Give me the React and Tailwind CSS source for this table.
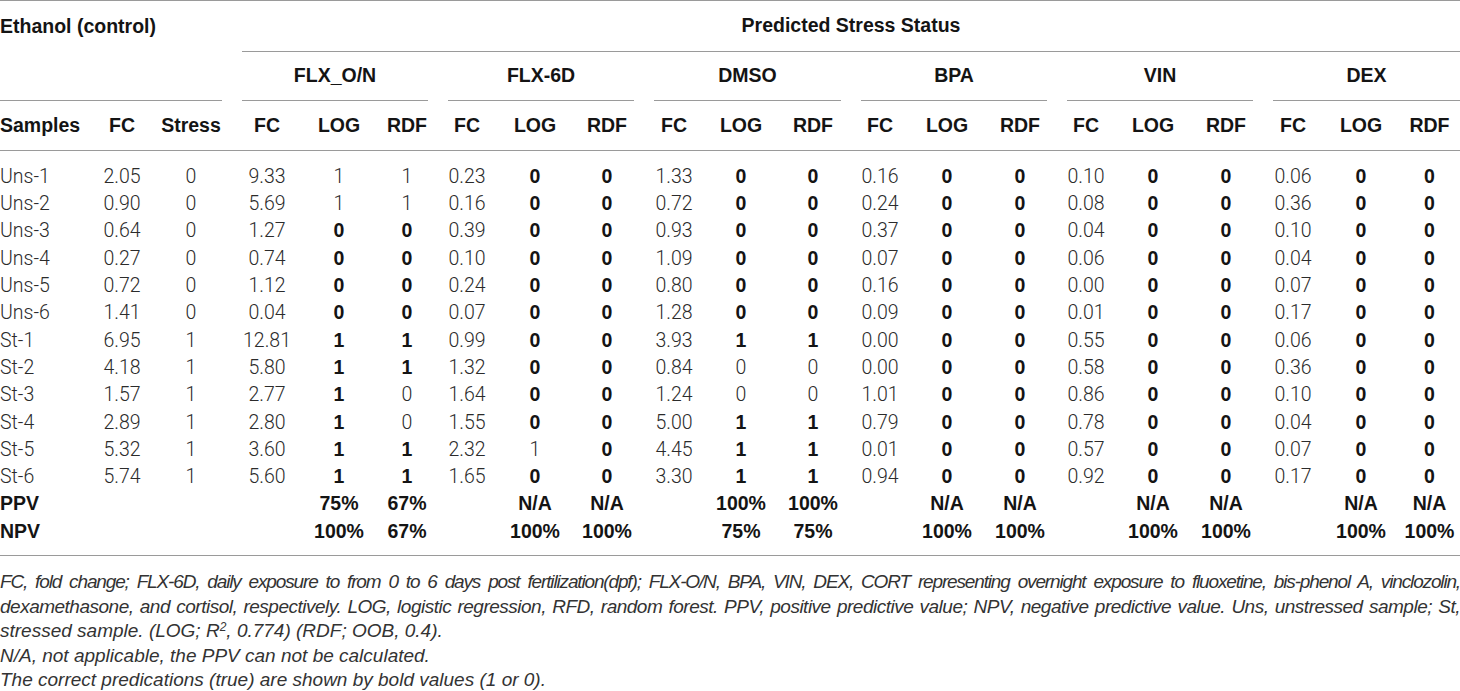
import React from "react";

const COLS =
  "grid grid-cols-[95px_54px_84px_68px_76px_60px_60px_76px_68px_66px_68px_76px_58px_76px_70px_62px_72px_74px_60px_76px_61px]";

const groups = [
  { name: "FLX_O/N", cls: "col-span-3 ml-[9px] mr-[9px]" },
  { name: "FLX-6D", cls: "col-span-3 ml-[11px] mr-[7px]" },
  { name: "DMSO", cls: "col-span-3 ml-[13px] mr-[10px]" },
  { name: "BPA", cls: "col-span-3 ml-[10px] mr-[8px]" },
  { name: "VIN", cls: "col-span-3 ml-[12px] mr-[10px]" },
  { name: "DEX", cls: "col-span-3 ml-[10px] mr-0" },
];

// value strings; a leading "*" marks bold
const rows = [
  ["Uns-1", "2.05", "0", "9.33", "1", "1", "0.23", "*0", "*0", "1.33", "*0", "*0", "0.16", "*0", "*0", "0.10", "*0", "*0", "0.06", "*0", "*0"],
  ["Uns-2", "0.90", "0", "5.69", "1", "1", "0.16", "*0", "*0", "0.72", "*0", "*0", "0.24", "*0", "*0", "0.08", "*0", "*0", "0.36", "*0", "*0"],
  ["Uns-3", "0.64", "0", "1.27", "*0", "*0", "0.39", "*0", "*0", "0.93", "*0", "*0", "0.37", "*0", "*0", "0.04", "*0", "*0", "0.10", "*0", "*0"],
  ["Uns-4", "0.27", "0", "0.74", "*0", "*0", "0.10", "*0", "*0", "1.09", "*0", "*0", "0.07", "*0", "*0", "0.06", "*0", "*0", "0.04", "*0", "*0"],
  ["Uns-5", "0.72", "0", "1.12", "*0", "*0", "0.24", "*0", "*0", "0.80", "*0", "*0", "0.16", "*0", "*0", "0.00", "*0", "*0", "0.07", "*0", "*0"],
  ["Uns-6", "1.41", "0", "0.04", "*0", "*0", "0.07", "*0", "*0", "1.28", "*0", "*0", "0.09", "*0", "*0", "0.01", "*0", "*0", "0.17", "*0", "*0"],
  ["St-1", "6.95", "1", "12.81", "*1", "*1", "0.99", "*0", "*0", "3.93", "*1", "*1", "0.00", "*0", "*0", "0.55", "*0", "*0", "0.06", "*0", "*0"],
  ["St-2", "4.18", "1", "5.80", "*1", "*1", "1.32", "*0", "*0", "0.84", "0", "0", "0.00", "*0", "*0", "0.58", "*0", "*0", "0.36", "*0", "*0"],
  ["St-3", "1.57", "1", "2.77", "*1", "0", "1.64", "*0", "*0", "1.24", "0", "0", "1.01", "*0", "*0", "0.86", "*0", "*0", "0.10", "*0", "*0"],
  ["St-4", "2.89", "1", "2.80", "*1", "0", "1.55", "*0", "*0", "5.00", "*1", "*1", "0.79", "*0", "*0", "0.78", "*0", "*0", "0.04", "*0", "*0"],
  ["St-5", "5.32", "1", "3.60", "*1", "*1", "2.32", "1", "*0", "4.45", "*1", "*1", "0.01", "*0", "*0", "0.57", "*0", "*0", "0.07", "*0", "*0"],
  ["St-6", "5.74", "1", "5.60", "*1", "*1", "1.65", "*0", "*0", "3.30", "*1", "*1", "0.94", "*0", "*0", "0.92", "*0", "*0", "0.17", "*0", "*0"],
  ["*PPV", "", "", "", "*75%", "*67%", "", "*N/A", "*N/A", "", "*100%", "*100%", "", "*N/A", "*N/A", "", "*N/A", "*N/A", "", "*N/A", "*N/A"],
  ["*NPV", "", "", "", "*100%", "*67%", "", "*100%", "*100%", "", "*75%", "*75%", "", "*100%", "*100%", "", "*100%", "*100%", "", "*100%", "*100%"],
];

const BOLD = "font-['Liberation_Sans',Arial,sans-serif] font-bold text-[#141414]";
const LIGHT = "font-['Roboto','Liberation_Sans',sans-serif] font-light text-[#2b2b2b]";

function Cell({ v, first }) {
  const bold = v.startsWith("*");
  const text = bold ? v.slice(1) : v;
  return (
    <div
      className={
        "h-[27.3px] flex items-center whitespace-nowrap " +
        (first ? "justify-start " : "justify-center ") +
        (bold ? BOLD : LIGHT)
      }
    >
      {text}
    </div>
  );
}

export default function App() {
  const headers = ["FC", "Stress", ...groups.flatMap(() => ["FC", "LOG", "RDF"])];
  return (
    <div className="w-[1460px] h-[691px] bg-white overflow-hidden text-[19.5px] leading-none">
      {/* header rows 1-2 */}
      <div className={COLS + " border-t border-[#9a9a9a] " + BOLD}>
        <div className="col-span-3 h-[51px] flex items-center">Ethanol (control)</div>
        <div className="col-span-18 ml-[9px] h-[51px] border-b border-[#9a9a9a] flex items-center justify-center">
          Predicted Stress Status
        </div>
        <div className="col-span-3 mr-[11px] h-[49px] border-b border-[#9a9a9a]" />
        {groups.map((g) => (
          <div
            key={g.name}
            className={g.cls + " h-[49px] border-b border-[#9a9a9a] flex items-center justify-center"}
          >
            {g.name}
          </div>
        ))}
      </div>
      {/* column header row */}
      <div className={COLS + " border-b border-[#9a9a9a] " + BOLD}>
        <div className="h-[49px] flex items-center">Samples</div>
        {headers.map((h, i) => (
          <div key={i} className="h-[49px] flex items-center justify-center">
            {h}
          </div>
        ))}
      </div>
      {/* data */}
      <div className={COLS + " pt-[12px] pb-[10px] border-b border-[#9a9a9a]"}>
        {rows.map((r, ri) =>
          r.map((v, ci) => <Cell key={ri + "-" + ci} v={v} first={ci === 0} />)
        )}
      </div>
      {/* footnotes */}
      <div className="pt-[14px] font-['Liberation_Sans',Arial,sans-serif] italic text-[19px] leading-[24.5px] text-[#333333]">
        <p className="text-justify [text-align-last:justify] tracking-[-1.15px]">
          FC, fold change; FLX-6D, daily exposure to from 0 to 6 days post fertilization(dpf); FLX-O/N, BPA, VIN, DEX, CORT representing overnight exposure to fluoxetine, bis-phenol A, vinclozolin,
        </p>
        <p className="text-justify [text-align-last:justify] tracking-[-0.5px]">
          dexamethasone, and cortisol, respectively. LOG, logistic regression, RFD, random forest. PPV, positive predictive value; NPV, negative predictive value. Uns, unstressed sample; St,
        </p>
        <p>
          stressed sample. (LOG; <i>R</i>
          <sup className="text-[12px]">2</sup>, 0.774) (RDF; OOB, 0.4).
        </p>
        <p>N/A, not applicable, the PPV can not be calculated.</p>
        <p>The correct predications (true) are shown by bold values (1 or 0).</p>
      </div>
    </div>
  );
}
